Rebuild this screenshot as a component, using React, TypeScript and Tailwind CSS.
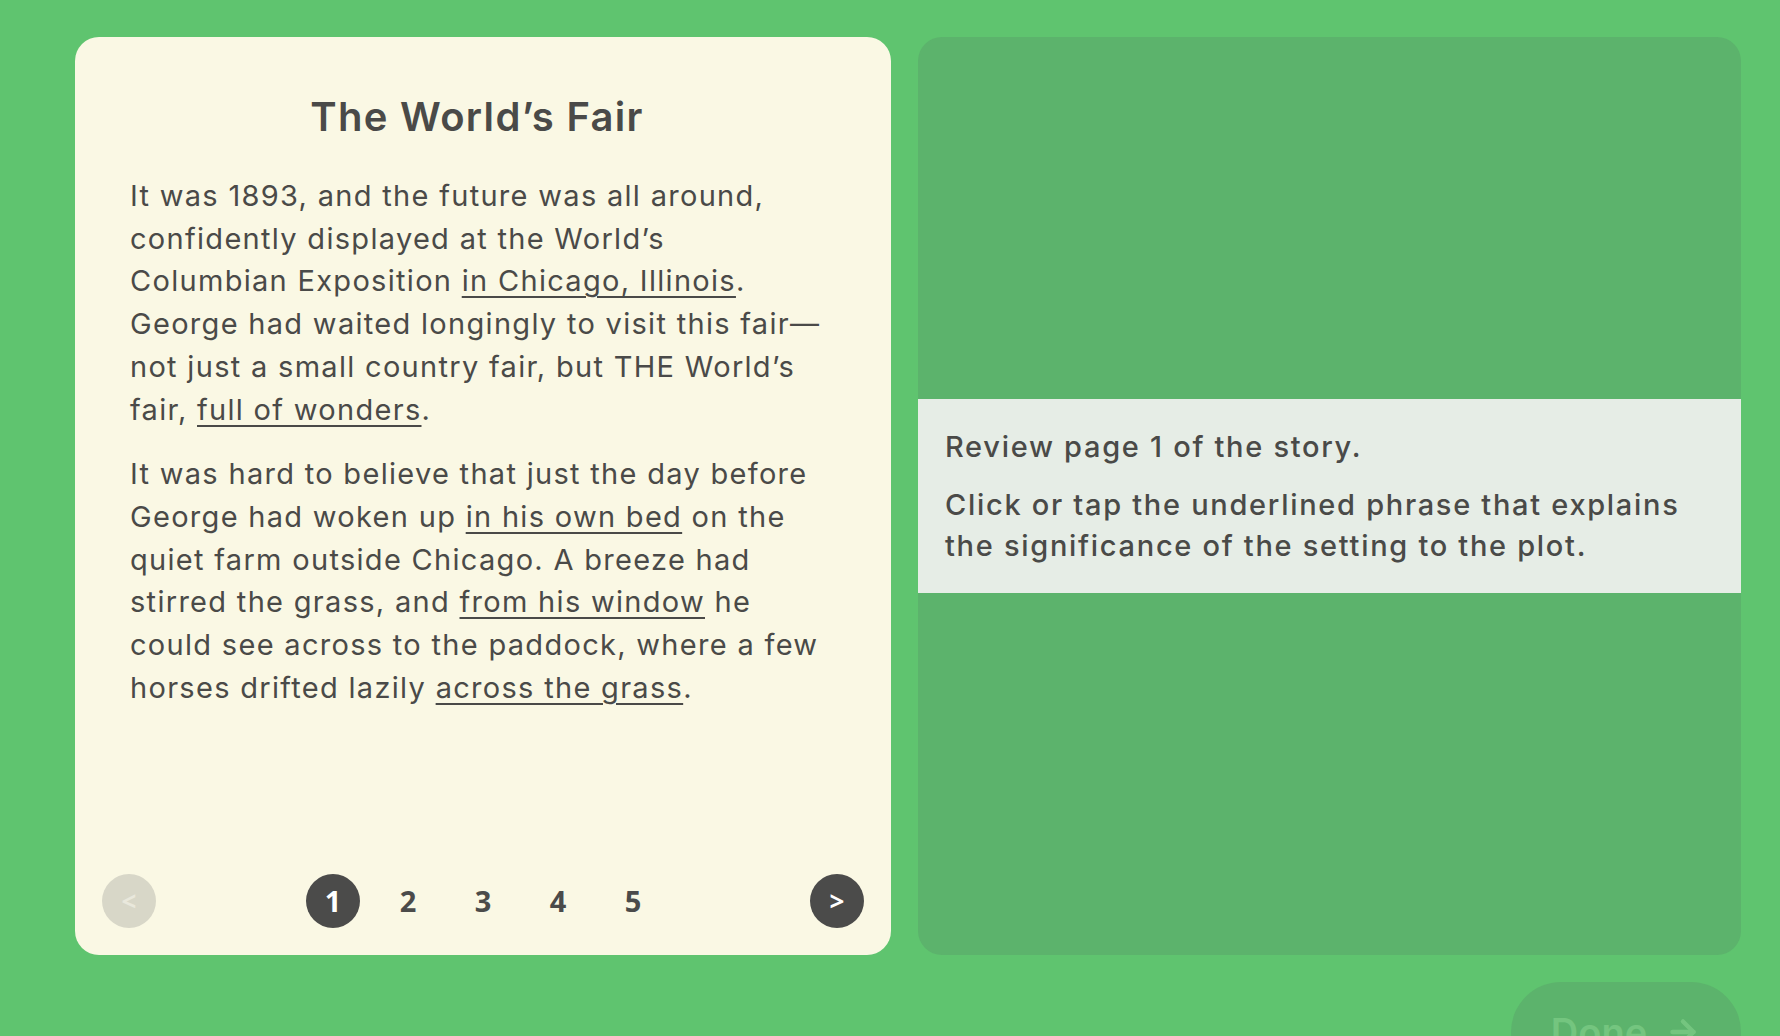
import React from "react";

const U = ({ children }: { children: React.ReactNode }) => (
  <span className="underline decoration-[1.5px] underline-offset-[5px] cursor-pointer">{children}</span>
);

export default function App() {
  const body = "text-[29px] leading-[42.7px] text-[#4a4a48] tracking-[1.3px]";
  return (
    <div
      className="min-h-screen w-full bg-[#5fc46f] pl-[75px] pr-[39px] pt-[37px] pb-[40px]"
      style={{ fontFamily: "Inter, 'Noto Sans', sans-serif" }}
    >
      <div className="flex gap-[27px]">
        <div className="flex h-[918px] w-[816px] flex-col rounded-[24px] bg-[#faf8e4]">
          <div className="flex-1 px-[55px] pt-[56px]">
            <h1 className="mb-[34px] pr-[12px] text-center text-[40px] font-semibold leading-[48px] tracking-[1.3px] text-[#4a4a48]">
              The World’s Fair
            </h1>
            <p className={body}>
              It was 1893, and the future was all around,
              <br />
              confidently displayed at the World’s
              <br />
              Columbian Exposition <U>in Chicago, Illinois</U>.
              <br />
              George had waited longingly to visit this fair—
              <br />
              not just a small country fair, but THE World’s
              <br />
              fair, <U>full of wonders</U>.
            </p>
            <p className={`${body} mt-[22px]`}>
              It was hard to believe that just the day before
              <br />
              George had woken up <U>in his own bed</U> on the
              <br />
              quiet farm outside Chicago. A breeze had
              <br />
              stirred the grass, and <U>from his window</U> he
              <br />
              could see across to the paddock, where a few
              <br />
              horses drifted lazily <U>across the grass</U>.
            </p>
          </div>
          <div
            className="flex items-center justify-between px-[27px] pb-[27px]"
            style={{ fontFamily: "'Open Sans', sans-serif" }}
          >
            <button className="flex h-[54px] w-[54px] items-center justify-center rounded-full bg-[#d8d7c8] text-[26px] font-bold text-[#e9e8dc]">
              &lt;
            </button>
            <div className="flex gap-[21px]">
              <div className="flex h-[54px] w-[54px] items-center justify-center rounded-full bg-[#4b4b4a] text-[29px] font-bold text-white">
                1
              </div>
              {["2", "3", "4", "5"].map((n) => (
                <div
                  key={n}
                  className="flex h-[54px] w-[54px] items-center justify-center text-[29px] font-bold text-[#4b4b4a]"
                >
                  {n}
                </div>
              ))}
            </div>
            <button className="flex h-[54px] w-[54px] items-center justify-center rounded-full bg-[#4b4b4a] text-[26px] font-bold text-white">
              &gt;
            </button>
          </div>
        </div>
        <div className="flex h-[918px] w-[823px] flex-col justify-center rounded-[24px] bg-[#5cb36c]">
          <div className="flex flex-col gap-[17px] bg-[#e6ede6] p-[27px] text-[29px] font-medium leading-[41px] tracking-[1.7px] text-[#4a4a48]">
            <p>Review page 1 of the story.</p>
            <p>
              Click or tap the underlined phrase that explains
              <br />
              the significance of the setting to the plot.
            </p>
          </div>
        </div>
      </div>
      <div className="mt-[27px] flex justify-end">
        <button className="flex h-[100px] w-[230px] items-center justify-center gap-[18px] rounded-full bg-[#5cb36c] text-[38px] font-semibold text-[#74c57f]">
          Done
          <svg width="36" height="36" viewBox="0 0 24 24" fill="none" stroke="currentColor" strokeWidth="3" strokeLinecap="round" strokeLinejoin="round">
            <path d="M5 12h14" />
            <path d="m12 5 7 7-7 7" />
          </svg>
        </button>
      </div>
    </div>
  );
}
